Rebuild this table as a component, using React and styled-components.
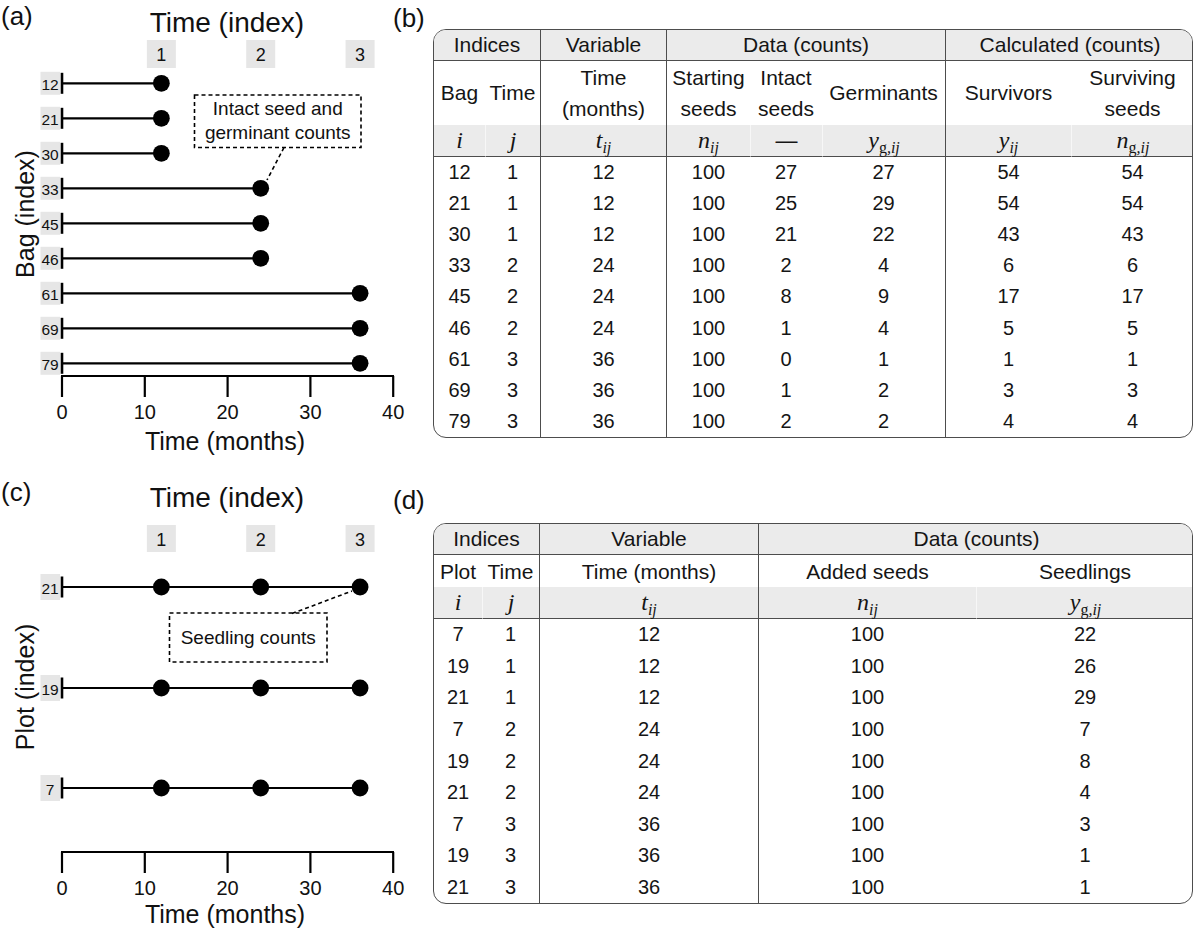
import React from "react";
import styled, { createGlobalStyle } from "styled-components";

const GlobalStyle = createGlobalStyle`
  html, body {
    margin: 0;
    padding: 0;
    background: #fff;
  }
  body {
    font-family: "Liberation Sans", Arial, sans-serif;
    color: #111;
  }
`;

const LINE = "#4d4d4d";
const SHADE = "#ebebeb";

const Page = styled.div`
  width: 1200px;
  height: 933px;
  display: grid;
  grid-template-columns: 393px 807px;
  grid-template-rows: 476px 457px;
  overflow: hidden;
`;

/* ---------- chart panels (a) and (c) ---------- */

const ChartPanel = styled.section`
  display: flex;
  flex-direction: column;
`;

const ChartHead = styled.div`
  display: flex;
  align-items: flex-start;
  height: 46px;
`;

const PanelLabel = styled.div`
  width: 60px;
  padding-left: 1px;
  font-size: 26px;
  line-height: ${props => props.$line}px;
`;

const ChartTitle = styled.div`
  width: 333px;
  text-align: center;
  font-size: 28px;
  line-height: ${props => props.$line}px;
`;

const Plot = styled.svg`
  display: block;
  overflow: visible;
  text {
    font-family: "Liberation Sans", Arial, sans-serif;
    fill: #111;
  }
`;

const xOf = m => 62 + m * 8.28;

const Chart = ({ top, height, boxY, boxH, labelH, rows, axisY, titleY, yLabel, yLabelY, callout }) => (
  <Plot width={393} height={height} viewBox={`0 ${top} 393 ${height}`}>
    {[12, 24, 36].map((m, i) => (
      <g key={m}>
        <rect x={xOf(m) - 14.5} y={boxY} width={29} height={boxH} fill="#e6e6e6" />
        <text x={xOf(m)} y={boxY + boxH / 2 + 1} fontSize={18} textAnchor="middle" dominantBaseline="central">
          {i + 1}
        </text>
      </g>
    ))}

    {rows.map(r => (
      <g key={r.label}>
        <rect x={40.5} y={r.y - labelH / 2} width={19.5} height={labelH} fill="#e6e6e6" />
        <text x={50} y={r.y + 1} fontSize={15.5} textAnchor="middle" dominantBaseline="central">
          {r.label}
        </text>
        <line x1={62} x2={62} y1={r.y - 10.5} y2={r.y + 10.5} stroke="#000" strokeWidth={2.6} />
        <line x1={62} x2={xOf(r.dots[r.dots.length - 1])} y1={r.y} y2={r.y} stroke="#000" strokeWidth={2.2} />
        {r.dots.map(m => (
          <circle key={m} cx={xOf(m)} cy={r.y} r={8.4} fill="#000" />
        ))}
      </g>
    ))}

    <line x1={61} x2={394} y1={axisY} y2={axisY} stroke="#000" strokeWidth={2.2} />
    {[0, 10, 20, 30, 40].map(t => (
      <g key={t}>
        <line x1={xOf(t)} x2={xOf(t)} y1={axisY} y2={axisY + 21} stroke="#000" strokeWidth={2.2} />
        <text x={xOf(t)} y={axisY + 36} fontSize={20} textAnchor="middle" dominantBaseline="central">
          {t}
        </text>
      </g>
    ))}
    <text x={225} y={titleY} fontSize={25} textAnchor="middle" dominantBaseline="central">
      Time (months)
    </text>
    <text
      x={25}
      y={yLabelY}
      fontSize={25}
      textAnchor="middle"
      dominantBaseline="central"
      transform={`rotate(-90 25 ${yLabelY})`}
    >
      {yLabel}
    </text>

    <rect
      x={callout.x}
      y={callout.y}
      width={callout.w}
      height={callout.h}
      fill="none"
      stroke="#000"
      strokeWidth={1.6}
      strokeDasharray="4 3"
    />
    {callout.lines.map((l, i) => (
      <text
        key={l}
        x={callout.x + callout.w / 2}
        y={callout.textY + i * 24}
        fontSize={19}
        textAnchor="middle"
        dominantBaseline="central"
      >
        {l}
      </text>
    ))}
    <line
      x1={callout.from[0]}
      y1={callout.from[1]}
      x2={callout.to[0]}
      y2={callout.to[1]}
      stroke="#000"
      strokeWidth={1.6}
      strokeDasharray="4 3"
    />
  </Plot>
);

const bagRows = [
  ["12", 12], ["21", 12], ["30", 12],
  ["33", 24], ["45", 24], ["46", 24],
  ["61", 36], ["69", 36], ["79", 36]
].map(([label, end], i) => ({ label, y: 83.3 + i * 35, dots: [end] }));

const plotRows = [
  { label: "21", y: 587, dots: [12, 24, 36] },
  { label: "19", y: 688, dots: [12, 24, 36] },
  { label: "7", y: 788, dots: [12, 24, 36] }
];

/* ---------- table panels (b) and (d) ---------- */

const TablePanel = styled.section`
  display: flex;
  flex-direction: column;
  padding-left: 40px;
`;

const TableLabel = styled.div`
  margin-left: -40px;
  font-size: 26px;
  line-height: ${props => props.$line}px;
  margin-bottom: ${props => props.$gap}px;
`;

const Frame = styled.div`
  box-sizing: border-box;
  width: 760px;
  border: 1.5px solid ${LINE};
  border-radius: 13px;
  overflow: hidden;
`;

const Grid = styled.table`
  width: 100%;
  border-collapse: separate;
  border-spacing: 0;
  table-layout: fixed;
  font-size: 20px;
  color: #151515;
  th, td {
    padding: 0;
    text-align: center;
    vertical-align: middle;
    font-weight: normal;
  }
`;

const divider = props => (props.$start && !props.$first ? `border-left: 1.5px solid ${LINE};` : "");

const GroupRow = styled.tr`
  height: 31px;
`;

const GroupHead = styled.th`
  background: ${SHADE};
  border-bottom: 1.5px solid ${LINE};
  font-size: 21px;
  ${divider}
`;

const SubRow = styled.tr`
  height: ${props => props.$h}px;
`;

const SubHead = styled.th`
  line-height: 31px;
  font-size: 21px;
  ${divider}
`;

const MathRow = styled.tr`
  height: 32px;
`;

const MathHead = styled.th`
  background: ${SHADE};
  border-bottom: 1.5px solid ${LINE};
  font-family: "Liberation Serif", "Times New Roman", serif;
  font-size: 24px;
  ${divider}
  ${props => (!props.$start ? "border-left: 1px solid #f7f7f7;" : "")}
`;

const DataRow = styled.tr`
  height: ${props => props.$h}px;
`;

const Cell = styled.td`
  ${divider}
`;

const M = styled.i`
  font-style: italic;
`;

const Sub = styled.sub`
  font-size: 16px;
  line-height: 0;
  vertical-align: -5px;
`;

const Rm = styled.span`
  font-style: normal;
`;

const Dash = styled.span`
  font-family: "Liberation Sans", Arial, sans-serif;
  font-size: 22px;
`;

const DataTable = ({ cols, groups, subs, subH, maths, rows, rowH }) => {
  const starts = [];
  groups.forEach(g => {
    starts.push(true);
    for (let k = 1; k < g.span; k++) starts.push(false);
  });
  return (
    <Frame>
      <Grid>
        <colgroup>
          {cols.map((w, i) => (
            <col key={i} style={{ width: w }} />
          ))}
        </colgroup>
        <thead>
          <GroupRow>
            {groups.map((g, i) => (
              <GroupHead key={g.label} colSpan={g.span} $start $first={i === 0}>
                {g.label}
              </GroupHead>
            ))}
          </GroupRow>
          <SubRow $h={subH}>
            {subs.map((s, i) => (
              <SubHead key={i} $start={starts[i]} $first={i === 0}>
                {s.map((line, k) => (
                  <div key={k}>{line}</div>
                ))}
              </SubHead>
            ))}
          </SubRow>
          <MathRow>
            {maths.map((m, i) => (
              <MathHead key={i} $start={starts[i]} $first={i === 0}>
                {m}
              </MathHead>
            ))}
          </MathRow>
        </thead>
        <tbody>
          {rows.map((r, ri) => (
            <DataRow key={ri} $h={rowH}>
              {r.map((v, i) => (
                <Cell key={i} $start={starts[i]} $first={i === 0}>
                  {v}
                </Cell>
              ))}
            </DataRow>
          ))}
        </tbody>
      </Grid>
    </Frame>
  );
};

const ij = <Sub>ij</Sub>;
const gij = (
  <Sub>
    <Rm>g</Rm>,ij
  </Sub>
);

const bagTable = {
  cols: [51, 55, 126, 84, 72, 123, 126, 123],
  groups: [
    { label: "Indices", span: 2 },
    { label: "Variable", span: 1 },
    { label: "Data (counts)", span: 3 },
    { label: "Calculated (counts)", span: 2 }
  ],
  subs: [
    ["Bag"], ["Time"], ["Time", "(months)"], ["Starting", "seeds"],
    ["Intact", "seeds"], ["Germinants"], ["Survivors"], ["Surviving", "seeds"]
  ],
  subH: 63.5,
  maths: [
    <M>i</M>,
    <M>j</M>,
    <M>t{ij}</M>,
    <M>n{ij}</M>,
    <Dash>—</Dash>,
    <M>y{gij}</M>,
    <M>y{ij}</M>,
    <M>n{gij}</M>
  ],
  rows: [
    [12, 1, 12, 100, 27, 27, 54, 54],
    [21, 1, 12, 100, 25, 29, 54, 54],
    [30, 1, 12, 100, 21, 22, 43, 43],
    [33, 2, 24, 100, 2, 4, 6, 6],
    [45, 2, 24, 100, 8, 9, 17, 17],
    [46, 2, 24, 100, 1, 4, 5, 5],
    [61, 3, 36, 100, 0, 1, 1, 1],
    [69, 3, 36, 100, 1, 2, 3, 3],
    [79, 3, 36, 100, 2, 2, 4, 4]
  ],
  rowH: 31.2
};

const plotTable = {
  cols: [48, 57, 219, 218, 218],
  groups: [
    { label: "Indices", span: 2 },
    { label: "Variable", span: 1 },
    { label: "Data (counts)", span: 2 }
  ],
  subs: [["Plot"], ["Time"], ["Time (months)"], ["Added seeds"], ["Seedlings"]],
  subH: 32,
  maths: [<M>i</M>, <M>j</M>, <M>t{ij}</M>, <M>n{ij}</M>, <M>y{gij}</M>],
  rows: [
    [7, 1, 12, 100, 22],
    [19, 1, 12, 100, 26],
    [21, 1, 12, 100, 29],
    [7, 2, 24, 100, 7],
    [19, 2, 24, 100, 8],
    [21, 2, 24, 100, 4],
    [7, 3, 36, 100, 3],
    [19, 3, 36, 100, 1],
    [21, 3, 36, 100, 1]
  ],
  rowH: 31.6
};

const App = () => (
  <>
    <GlobalStyle />
    <Page>
      <ChartPanel>
        <ChartHead>
          <PanelLabel $line={32}>(a)</PanelLabel>
          <ChartTitle $line={46}>Time (index)</ChartTitle>
        </ChartHead>
        <Chart
          top={46}
          height={430}
          boxY={40}
          boxH={28}
          labelH={23}
          rows={bagRows}
          axisY={376}
          titleY={441}
          yLabel="Bag (index)"
          yLabelY={214}
          callout={{
            x: 194.5,
            y: 95,
            w: 166.5,
            h: 52.5,
            lines: ["Intact seed and", "germinant counts"],
            textY: 108,
            from: [284, 147.5],
            to: [267, 180]
          }}
        />
      </ChartPanel>

      <TablePanel>
        <TableLabel $line={36} $gap={-7}>(b)</TableLabel>
        <DataTable {...bagTable} />
      </TablePanel>

      <ChartPanel>
        <ChartHead>
          <PanelLabel $line={32}>(c)</PanelLabel>
          <ChartTitle $line={44}>Time (index)</ChartTitle>
        </ChartHead>
        <Chart
          top={522}
          height={411}
          boxY={525}
          boxH={27}
          labelH={26}
          rows={plotRows}
          axisY={852}
          titleY={914}
          yLabel="Plot (index)"
          yLabelY={687}
          callout={{
            x: 169.5,
            y: 613,
            w: 157.5,
            h: 49,
            lines: ["Seedling counts"],
            textY: 637,
            from: [292, 613.5],
            to: [352, 591]
          }}
        />
      </ChartPanel>

      <TablePanel>
        <TableLabel $line={48} $gap={-1}>(d)</TableLabel>
        <DataTable {...plotTable} />
      </TablePanel>
    </Page>
  </>
);

export default App;
